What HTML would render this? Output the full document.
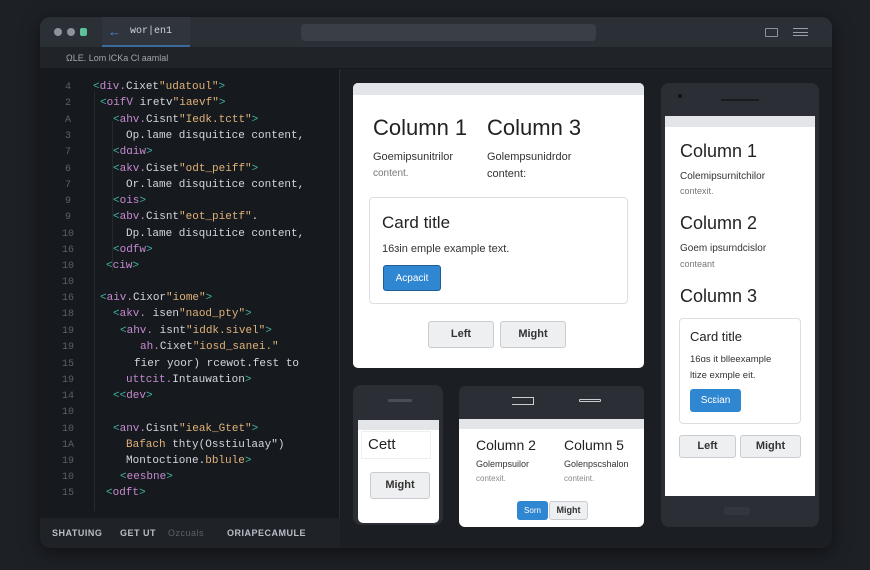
<!DOCTYPE html>
<html><head><style>
*{margin:0;padding:0;box-sizing:border-box}
body{width:870px;height:570px;background:#1d2025;position:relative;overflow:hidden;font-family:"Liberation Sans",sans-serif}
.win{position:absolute;left:40px;top:17px;width:792px;height:531px;border-radius:10px;background:#1b1e22;overflow:hidden;box-shadow:0 4px 18px rgba(0,0,0,.5)}
.title{position:absolute;left:0;top:0;width:792px;height:30px;background:#2b2f36}
.sub{position:absolute;left:0;top:30px;width:792px;height:22px;background:#202328;border-bottom:1px solid #15171a}
.code{position:absolute;left:0;top:52px;width:300px;height:479px;background:#16191d;border-right:1px solid #2a2d33}
.status{position:absolute;left:0;top:449px;width:300px;height:30px;background:#1f2227;font-size:9px;color:#b9bfc8;font-weight:bold;letter-spacing:.5px}
.ln{position:absolute;left:18px;width:20px;text-align:center;color:#5a616b;font:10px "Liberation Mono",monospace}
.cl{position:absolute;font:11px "Liberation Mono",monospace;color:#d3d7de;white-space:pre}
.t{color:#3fb6a0}.p{color:#c58ad0}.s{color:#e0b27a}
.card{position:absolute;background:#fff;border-radius:5px;overflow:hidden}
.h{color:#222;font-weight:normal}
.btn{position:absolute;background:#eeeff1;border:1px solid #c9ccd0;border-radius:3px;font-size:11px;color:#333;text-align:center;font-weight:bold}
.blue{position:absolute;background:#2f86d1;border-radius:3px;color:#fff;font-size:10px;text-align:center}
</style></head><body>
<div class="win">
 <div class="title">
  <div style="position:absolute;left:14px;top:11px;width:8px;height:8px;border-radius:50%;background:#8d939b"></div>
  <div style="position:absolute;left:27px;top:11px;width:8px;height:8px;border-radius:50%;background:#8d939b"></div>
  <div style="position:absolute;left:40px;top:11px;width:7px;height:8px;border-radius:2px;background:#5fc19a"></div>
  <div style="position:absolute;left:62px;top:0;width:88px;height:30px;background:#30353d;border-bottom:2px solid #3b6a9a"></div>
  <div style="position:absolute;left:68px;top:7px;color:#4a8fd6;font-size:13px">←</div>
  <div style="position:absolute;left:90px;top:9px;color:#d0d4da;font:10px 'Liberation Mono',monospace">wor|en1</div>
  <div style="position:absolute;left:261px;top:7px;width:295px;height:17px;border-radius:4px;background:#3a3f47"></div>
  <div style="position:absolute;left:725px;top:11px;width:13px;height:9px;border:1px solid #8d939b;border-radius:1px"></div>
  <div style="position:absolute;left:753px;top:11px;width:15px;height:8px;border-top:1px solid #9aa0a8;border-bottom:1px solid #9aa0a8"><div style="margin-top:2.5px;height:1px;background:#9aa0a8"></div></div>
 </div>
 <div class="sub"><div style="position:absolute;left:26px;top:6px;color:#a0a6ae;font-size:9px">ΩLE. Lom lCKa  Cl aamlal</div></div>
 <div class="code">
  <div style="position:absolute;left:54px;top:22px;width:1px;height:420px;background:#262a30"></div>
  <div style="position:absolute;left:72px;top:52px;width:1px;height:150px;background:#262a30"></div>
  <div id="c"></div>
  <div class="status">
   <span style="position:absolute;left:12px;top:10px">SHATUING</span>
   <span style="position:absolute;left:80px;top:10px">GET UT</span>
   <span style="position:absolute;left:128px;top:10px;color:#5c626b;font-weight:normal">Ozcuals</span>
   <span style="position:absolute;left:187px;top:10px">ORIAPECAMULE</span>
  </div>
 </div>
 <!-- big card -->
 <div class="card" style="left:313px;top:66px;width:291px;height:285px">
  <div style="height:12px;background:#e4e5e8"></div>
  <div class="h" style="position:absolute;left:20px;top:32px;font-size:22px">Column 1</div>
  <div class="h" style="position:absolute;left:134px;top:32px;font-size:22px">Column 3</div>
  <div style="position:absolute;left:20px;top:68px;font-size:11px;color:#333">Goemipsunitrilor</div>
  <div style="position:absolute;left:20px;top:85px;font-size:10px;color:#777">content.</div>
  <div style="position:absolute;left:134px;top:68px;font-size:11px;color:#333">Golempsunidrdor</div>
  <div style="position:absolute;left:134px;top:85px;font-size:11px;color:#333">content:</div>
  <div style="position:absolute;left:16px;top:114px;width:259px;height:107px;border:1px solid #dcdee1;border-radius:4px">
   <div style="position:absolute;left:12px;top:15px;font-size:17px;color:#222">Card title</div>
   <div style="position:absolute;left:12px;top:45px;font-size:11px;color:#333">16ɜin emple example text.</div>
   <div class="blue" style="left:13px;top:67px;width:58px;height:26px;line-height:26px;border:1px solid #1f5d95">Acpacit</div>
  </div>
  <div class="btn" style="left:75px;top:238px;width:66px;height:27px;line-height:25px">Left</div>
  <div class="btn" style="left:147px;top:238px;width:66px;height:27px;line-height:25px">Might</div>
 </div>
 <!-- phone right -->
 <div style="position:absolute;left:621px;top:66px;width:158px;height:444px;background:#2b2f35;border-radius:8px">
  <div style="position:absolute;left:17px;top:11px;width:4px;height:4px;border-radius:50%;background:#111"></div>
  <div style="position:absolute;left:60px;top:16px;width:38px;height:2px;background:#1a1c20"></div>
  <div class="card" style="left:4px;top:33px;width:150px;height:380px;border-radius:0">
   <div style="height:11px;background:#e4e5e8"></div>
   <div class="h" style="position:absolute;left:15px;top:25px;font-size:18px">Column 1</div>
   <div style="position:absolute;left:15px;top:55px;font-size:10px;color:#333">Colemipsurnitchilor</div>
   <div style="position:absolute;left:15px;top:70px;font-size:9px;color:#777">contexit.</div>
   <div class="h" style="position:absolute;left:15px;top:97px;font-size:18px">Column 2</div>
   <div style="position:absolute;left:15px;top:127px;font-size:10px;color:#333">Goem ipsurndcislor</div>
   <div style="position:absolute;left:15px;top:143px;font-size:9px;color:#777">conteant</div>
   <div class="h" style="position:absolute;left:15px;top:170px;font-size:18px">Column 3</div>
   <div style="position:absolute;left:14px;top:202px;width:122px;height:106px;border:1px solid #dcdee1;border-radius:4px">
    <div style="position:absolute;left:10px;top:10px;font-size:13px;color:#222">Card title</div>
    <div style="position:absolute;left:10px;top:33px;font-size:9.5px;color:#333;line-height:16px">16ɑs it blleexample<br>ltize exmple eit.</div>
    <div class="blue" style="left:10px;top:70px;width:51px;height:23px;line-height:23px">Scɛian</div>
   </div>
   <div class="btn" style="left:14px;top:319px;width:57px;height:23px;line-height:21px">Left</div>
   <div class="btn" style="left:75px;top:319px;width:61px;height:23px;line-height:21px">Might</div>
  </div>
  <div style="position:absolute;left:63px;top:424px;width:26px;height:8px;border-radius:3px;background:#33373d"></div>
 </div>
 <!-- small phone -->
 <div style="position:absolute;left:313px;top:368px;width:90px;height:140px;background:#2b2f35;border-radius:8px">
  <div style="position:absolute;left:35px;top:14px;width:24px;height:3px;background:#494e55;border-radius:2px"></div>
  <div class="card" style="left:5px;top:35px;width:81px;height:103px;border-radius:0 0 5px 5px">
   <div style="height:10px;background:#e4e5e8"></div>
   <div style="position:absolute;left:3px;top:11px;width:70px;height:28px;border:1px solid #eee;font-size:15px;color:#222;padding:4px 6px">Cett</div>
   <div class="btn" style="left:12px;top:52px;width:60px;height:27px;line-height:25px;font-weight:bold">Might</div>
  </div>
 </div>
 <!-- tablet -->
 <div style="position:absolute;left:419px;top:369px;width:185px;height:141px;background:#2b2f35;border-radius:6px;overflow:hidden">
  <div style="position:absolute;left:53px;top:11px;width:22px;height:8px;border:1.5px solid #c9ccd0;border-left:none"></div>
  <div style="position:absolute;left:120px;top:13px;width:22px;height:3px;border:1px solid #c9ccd0;border-radius:1px"></div>
  <div class="card" style="left:0;top:33px;width:185px;height:108px;border-radius:0">
   <div style="height:10px;background:#e4e5e8"></div>
   <div class="h" style="position:absolute;left:17px;top:18px;font-size:14px">Column 2</div>
   <div class="h" style="position:absolute;left:105px;top:18px;font-size:14px">Column 5</div>
   <div style="position:absolute;left:17px;top:40px;font-size:9px;color:#333">Golempsuilor</div>
   <div style="position:absolute;left:105px;top:40px;font-size:9px;color:#333">Golenpscshalon</div>
   <div style="position:absolute;left:17px;top:55px;font-size:8px;color:#888">contexit.</div>
   <div style="position:absolute;left:105px;top:55px;font-size:8px;color:#888">conteint.</div>
   <div class="blue" style="left:58px;top:82px;width:31px;height:19px;line-height:19px;font-size:8px">Sorn</div>
   <div class="btn" style="left:90px;top:82px;width:39px;height:19px;line-height:17px;font-size:9px">Might</div>
  </div>
 </div>
</div>
<script>
var L=[
["4",88,93,'<span class="t">&lt;</span><span class="p">div.</span>Cixet<span class="s">"udatoul"</span><span class="t">&gt;</span>'],
["2",104,100,'<span class="t">&lt;</span><span class="p">oifV</span> iretv<span class="s">"iaevf"</span><span class="t">&gt;</span>'],
["A",121,113,'<span class="t">&lt;</span><span class="p">ahv.</span>Cisnt<span class="s">"Iedk.tctt"</span><span class="t">&gt;</span>'],
["3",137,126,'Op.lame disquitice content,'],
["7",153,113,'<span class="t">&lt;</span><span class="p">dɑiw</span><span class="t">&gt;</span>'],
["6",170,113,'<span class="t">&lt;</span><span class="p">akv.</span>Ciset<span class="s">"odt_peiff"</span><span class="t">&gt;</span>'],
["7",186,126,'Or.lame disquitice content,'],
["9",202,113,'<span class="t">&lt;</span><span class="p">ois</span><span class="t">&gt;</span>'],
["9",218,113,'<span class="t">&lt;</span><span class="p">abv.</span>Cisnt<span class="s">"eot_pietf"</span>.'],
["10",235,126,'Dp.lame disquitice content,'],
["16",251,113,'<span class="t">&lt;</span><span class="p">odfw</span><span class="t">&gt;</span>'],
["10",267,106,'<span class="t">&lt;</span><span class="p">ciw</span><span class="t">&gt;</span>'],
["10",283,0,''],
["16",299,100,'<span class="t">&lt;</span><span class="p">aiv.</span>Cixor<span class="s">"iome"</span><span class="t">&gt;</span>'],
["18",315,113,'<span class="t">&lt;</span><span class="p">akv.</span> isen<span class="s">"naod_pty"</span><span class="t">&gt;</span>'],
["19",332,120,'<span class="t">&lt;</span><span class="p">ahv.</span> isnt<span class="s">"iddk.sivel"</span><span class="t">&gt;</span>'],
["19",348,140,'<span class="p">ah.</span>Cixet<span class="s">"iosd_sanei."</span>'],
["15",365,134,'fier yoor) rcewot.fest to'],
["19",381,126,'<span class="p">uttcit.</span>Intauwation<span class="t">&gt;</span>'],
["14",397,113,'<span class="t">&lt;&lt;</span><span class="p">dev</span><span class="t">&gt;</span>'],
["10",413,0,''],
["10",430,113,'<span class="t">&lt;</span><span class="p">anv.</span>Cisnt<span class="s">"ieak_Gtet"</span><span class="t">&gt;</span>'],
["1A",446,126,'<span class="s">Bafach</span> thty(Osstiulaay")'],
["19",462,126,'Montoctione.<span class="s">bblule</span><span class="t">&gt;</span>'],
["10",478,120,'<span class="t">&lt;</span><span class="p">eesbne</span><span class="t">&gt;</span>'],
["15",494,106,'<span class="t">&lt;</span><span class="p">odft</span><span class="t">&gt;</span>']];
var h='';L.forEach(function(a){var y=a[1]-17-52-6;h+='<div class="ln" style="top:'+y+'px">'+a[0]+'</div>';if(a[3])h+='<div class="cl" style="left:'+(a[2]-40)+'px;top:'+(y-1)+'px">'+a[3]+'</div>';});
document.getElementById('c').innerHTML=h;
</script>
</body></html>
